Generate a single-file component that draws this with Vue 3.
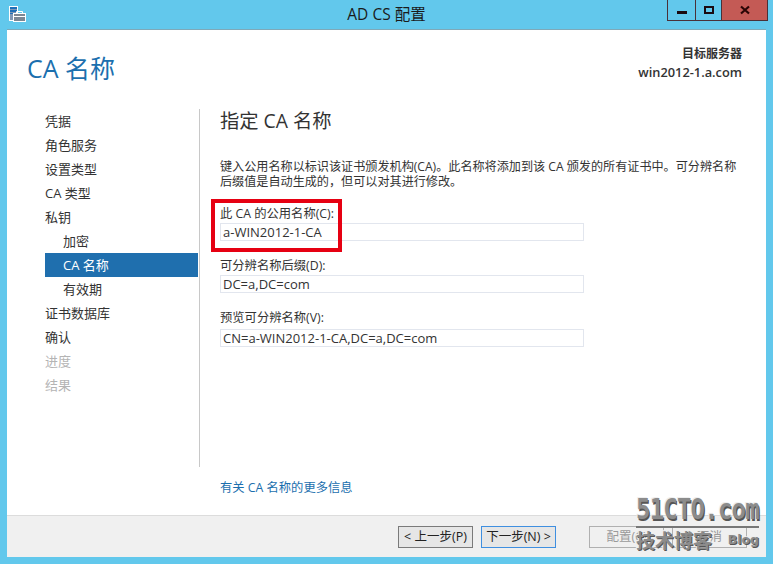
<script setup>
const steps = [
  { name: '凭据' },
  { name: '角色服务' },
  { name: '设置类型' },
  { name: 'CA 类型' },
  { name: '私钥' },
  { name: '加密', sub: true },
  { name: 'CA 名称', sub: true, active: true },
  { name: '有效期', sub: true },
  { name: '证书数据库' },
  { name: '确认' },
  { name: '进度', off: true },
  { name: '结果', off: true }
]

const fields = [
  { label: '此 CA 的公用名称(C):', value: 'a-WIN2012-1-CA' },
  { label: '可分辨名称后缀(D):', value: 'DC=a,DC=com' },
  { label: '预览可分辨名称(V):', value: 'CN=a-WIN2012-1-CA,DC=a,DC=com' }
]
</script>

<template>
  <div class="window">
    <div class="titlebar">
      <svg class="app-icon" width="17" height="16" viewBox="0 0 17 16">
        <rect x="0.5" y="0.5" width="8" height="14" fill="#7f97b5" stroke="#fff" />
        <rect x="1" y="1" width="7" height="2" fill="#1d6fb8" />
        <rect x="1" y="4" width="7" height="2" fill="#1d6fb8" />
        <rect x="1" y="7" width="7" height="1" fill="#1d6fb8" />
        <rect x="4.5" y="7.5" width="12" height="8" fill="#7b8794" stroke="#fff" />
        <path d="M7.5 7.5v-2h6v2" fill="none" stroke="#fff" />
        <path d="M5 10.5h11" stroke="#fff" />
      </svg>
      <span class="title">AD CS 配置</span>
      <div class="controls">
        <div class="ctl ctl-min"><i></i></div>
        <div class="ctl ctl-max"><i></i></div>
        <div class="ctl ctl-close">
          <svg width="10" height="10" viewBox="0 0 10 10">
            <path d="M1 1.5l8 7M9 1.5l-8 7" stroke="#2a0505" stroke-width="2.2" />
          </svg>
        </div>
      </div>
    </div>

    <div class="client">
      <div class="content">
        <div class="head">
          <h1>CA 名称</h1>
          <div class="server">
            <div>目标服务器</div>
            <div class="server-name">win2012-1.a.com</div>
          </div>
        </div>

        <div class="columns">
          <ul class="steps">
            <li
              v-for="s in steps"
              :key="s.name"
              :class="{ sub: s.sub, active: s.active, off: s.off }"
            >{{ s.name }}</li>
          </ul>

          <div class="main">
            <h2>指定 CA 名称</h2>
            <p class="desc">键入公用名称以标识该证书颁发机构(CA)。此名称将添加到该 CA 颁发的所有证书中。可分辨名称<br />后缀值是自动生成的，但可以对其进行修改。</p>
            <div class="fields">
              <div v-for="f in fields" :key="f.label" class="field">
                <label>{{ f.label }}</label>
                <div class="input">{{ f.value }}</div>
              </div>
            </div>
            <a class="more">有关 CA 名称的更多信息</a>
          </div>
        </div>
      </div>

      <div class="footer">
        <button class="btn">&lt; 上一步(P)</button>
        <button class="btn btn-next">下一步(N) &gt;</button>
        <button class="btn btn-off btn-cfg">配置(C)</button>
        <button class="btn btn-off">取消</button>
      </div>
    </div>

    <div class="highlight"></div>

    <div class="watermark">
      <div class="wm-logo"><span>51CTO.com</span></div>
      <div class="wm-sub"><span class="wm-cn">技术博客</span><span class="wm-blog">Blog</span></div>
    </div>
  </div>
</template>

<style>
html, body {
  margin: 0;
  background: #62c8ec;
}
</style>

<style scoped>
.window {
  position: relative;
  width: 773px;
  height: 564px;
  background: #62c8ec;
  display: flex;
  flex-direction: column;
  overflow: hidden;
  font-family: "Open Sans", "Noto Sans CJK SC", sans-serif;
  font-size: 12px;
  color: #333;
}

.titlebar {
  height: 29px;
  flex: none;
  display: flex;
  align-items: flex-start;
  justify-content: center;
  position: relative;
}

.app-icon {
  position: absolute;
  left: 9px;
  top: 6px;
}

.title {
  font-size: 15.5px;
  line-height: 28px;
  color: #1a1a1a;
}

.controls {
  position: absolute;
  top: 0;
  right: 5px;
  display: flex;
  height: 20px;
  border: 1px solid #4a3038;
  border-top: 0;
}

.ctl {
  display: flex;
  align-items: center;
  justify-content: center;
  box-sizing: border-box;
}

.ctl-min {
  width: 28px;
  border-right: 1px solid #4a3038;
}

.ctl-min i {
  width: 10px;
  height: 3px;
  background: #1a0a10;
  margin-top: 5px;
}

.ctl-max {
  width: 26px;
  border-right: 1px solid #4a3038;
}

.ctl-max i {
  width: 6px;
  height: 4px;
  border: 2px solid #1a0a10;
}

.ctl-close {
  width: 45px;
  background: #c45a55;
}

.client {
  flex: 1;
  margin: 0 7px 7px;
  border-top: 1px solid #7fa9b8;
  background: #fff;
  display: flex;
  flex-direction: column;
  min-height: 0;
}

.content {
  flex: 1;
  display: flex;
  flex-direction: column;
  min-height: 0;
}

.head {
  height: 79px;
  flex: none;
  display: flex;
  justify-content: space-between;
  padding: 0 24px 0 20px;
}

h1 {
  margin: 20px 0 0;
  font-size: 25px;
  line-height: 36px;
  font-weight: 400;
  color: #1b6fae;
}

.server {
  margin-top: 14px;
  text-align: right;
  font-weight: 600;
  font-size: 12px;
  line-height: 19px;
  color: #333;
}

.server-name {
  font-size: 12.8px;
}

.columns {
  flex: 1;
  display: flex;
  min-height: 0;
}

.steps {
  list-style: none;
  margin: 0 0 48px 38px;
  padding: 0 1px 0 0;
  width: 153px;
  border-right: 1px solid #c8c8c8;
  box-sizing: content-box;
}

.steps li {
  height: 24px;
  line-height: 24px;
  font-size: 13px;
  color: #333;
}

.steps li.sub {
  padding-left: 18px;
}

.steps li.active {
  background: #1f6fae;
  color: #fff;
}

.steps li.off {
  color: #b4b4b4;
}

.main {
  flex: 1;
  display: flex;
  flex-direction: column;
  padding: 0 28px 0 20px;
  min-width: 0;
}

h2 {
  margin: 1px 0 0;
  font-size: 19.3px;
  line-height: 22px;
  font-weight: 400;
  color: #333;
}

.desc {
  margin: 27px 0 0;
  font-size: 12.12px;
  line-height: 15px;
  color: #333;
  white-space: nowrap;
}

.fields {
  display: flex;
  flex-direction: column;
  gap: 18px;
  margin-top: 18px;
}

.field label {
  display: block;
  line-height: 14px;
  height: 16px;
  font-size: 12.3px;
}

.field:last-child label {
  height: 18px;
}

.input {
  box-sizing: border-box;
  width: 364px;
  height: 18px;
  line-height: 16px;
  border: 1px solid #e2e6ee;
  padding-left: 2px;
  font-size: 13px;
  color: #333;
}

.more {
  margin-top: auto;
  margin-bottom: 19px;
  color: #1b6fae;
  font-size: 12.3px;
}

.footer {
  height: 42px;
  flex: none;
  background: #f0f0f0;
  border-top: 1px solid #dcdcdc;
  display: flex;
  align-items: flex-start;
  padding: 10px 0 0 391px;
  box-sizing: border-box;
}

.btn {
  width: 75px;
  height: 22px;
  padding: 0;
  margin-right: 8px;
  font-family: inherit;
  font-size: 12.5px;
  line-height: 18px;
  color: #222;
  background: #e6e6e6;
  border: 1px solid #7a7a7a;
}

.btn-next {
  border-color: #3f8fe0;
  margin-right: 33px;
}

.btn-off {
  color: #9a9a9a;
  background: #f0f0f0;
  border-color: #b0b0b0;
}

.btn-cfg {
  margin-right: 8px;
}

.highlight {
  position: absolute;
  left: 211px;
  top: 199px;
  width: 131px;
  height: 53px;
  box-sizing: border-box;
  border: 4px solid #e60012;
}

.watermark {
  position: absolute;
  left: 636px;
  top: 497px;
  width: 123px;
  color: #8c8c8c;
  text-shadow: 1px 1px 0 #555, -1px -1px 0 #eee;
}

.wm-logo {
  font-family: "DejaVu Sans Mono", monospace;
  font-size: 24px;
  font-weight: 700;
  line-height: 29px;
  letter-spacing: -0.8px;
  border-bottom: 2px solid #777;
  white-space: nowrap;
}

.wm-logo span {
  display: inline-block;
  transform: scaleY(1.2);
  transform-origin: 50% 70%;
}

.wm-sub {
  display: flex;
  justify-content: space-between;
  align-items: center;
  margin-top: 1px;
}

.wm-cn {
  font-size: 19px;
  font-weight: 700;
  line-height: 24px;
}

.wm-blog {
  font-family: "DejaVu Sans", sans-serif;
  font-size: 12.5px;
  font-weight: 700;
  margin-bottom: 4px;
}
</style>
